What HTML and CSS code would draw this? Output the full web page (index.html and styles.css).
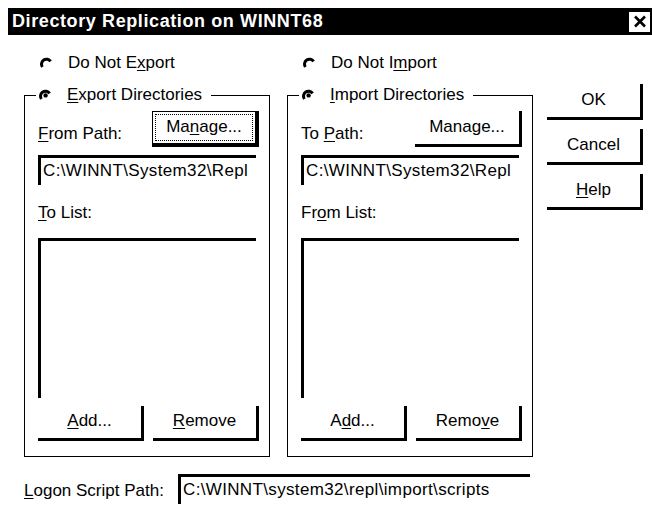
FILE: index.html
```html
<!DOCTYPE html>
<html lang="en">
<head>
    <meta charset="UTF-8">
    <title>Directory Replication on WINNT68</title>
    <link rel="stylesheet" href="styles.css">
</head>
<body>

<div class="dialog">
    <div class="titlebar">
        <span class="title">Directory Replication on WINNT68</span>
        <span class="close">
            <svg width="14" height="13" viewBox="0 0 14 13"><path d="M2 1.5 L12 11.5 M12 1.5 L2 11.5" stroke="#000" stroke-width="2.6" fill="none"/></svg>
        </span>
    </div>

    <div class="main">
        <!-- export side -->
        <div class="pane">
            <div class="radio-line">
                <svg class="radio" width="12" height="14" viewBox="0 0 12 14"><path d="M2.4 11 A4.6 4.6 0 1 1 10.6 5.4" fill="none" stroke="#000" stroke-width="3"/></svg>
                <span>Do Not E<u>x</u>port</span>
            </div>
            <fieldset class="group">
                <legend>
                    <svg class="radio" width="12" height="14" viewBox="0 0 12 14"><path d="M2.4 11 A4.6 4.6 0 1 1 10.6 5.4" fill="none" stroke="#000" stroke-width="3"/><circle cx="6.6" cy="7.4" r="2.2" fill="#000"/></svg>
                    <span><u>E</u>xport Directories</span>
                </legend>
                <div class="path-row">
                    <span class="label"><u>F</u>rom Path:</span>
                    <span class="btn default"><span class="focus">Ma<u>n</u>age...</span></span>
                </div>
                <div class="field">C:\WINNT\System32\Repl</div>
                <div class="label list-label"><u>T</u>o List:</div>
                <div class="listbox"></div>
                <div class="btn-row">
                    <span class="btn"><u>A</u>dd...</span>
                    <span class="btn"><u>R</u>emove</span>
                </div>
            </fieldset>
        </div>

        <!-- import side -->
        <div class="pane">
            <div class="radio-line">
                <svg class="radio" width="12" height="14" viewBox="0 0 12 14"><path d="M2.4 11 A4.6 4.6 0 1 1 10.6 5.4" fill="none" stroke="#000" stroke-width="3"/></svg>
                <span>Do Not I<u>m</u>port</span>
            </div>
            <fieldset class="group">
                <legend>
                    <svg class="radio" width="12" height="14" viewBox="0 0 12 14"><path d="M2.4 11 A4.6 4.6 0 1 1 10.6 5.4" fill="none" stroke="#000" stroke-width="3"/><circle cx="6.6" cy="7.4" r="2.2" fill="#000"/></svg>
                    <span><u>I</u>mport Directories</span>
                </legend>
                <div class="path-row">
                    <span class="label">To <u>P</u>ath:</span>
                    <span class="btn">Manage...</span>
                </div>
                <div class="field">C:\WINNT\System32\Repl</div>
                <div class="label list-label">Fr<u>o</u>m List:</div>
                <div class="listbox"></div>
                <div class="btn-row">
                    <span class="btn">A<u>d</u>d...</span>
                    <span class="btn">Remo<u>v</u>e</span>
                </div>
            </fieldset>
        </div>

        <div class="side-buttons">
            <span class="btn">OK</span>
            <span class="btn">Cancel</span>
            <span class="btn"><u>H</u>elp</span>
        </div>
    </div>

    <div class="logon-row">
        <span class="label"><u>L</u>ogon Script Path:</span>
        <div class="field logon-field">C:\WINNT\system32\repl\import\scripts</div>
    </div>
</div>

</body>
</html>
```

FILE: styles.css
```css
body {
    background-color: #fff;
    color: #000;
    font-family: "Liberation Sans", Arial, sans-serif;
    font-size: 17px;
    margin: 0;
    padding: 0;
}
.dialog {
    width: 652px;
    height: 523px;
    overflow: hidden;
}
.titlebar {
    margin: 8px 0 0 8px;
    height: 27px;
    background-color: #000;
    display: flex;
    align-items: center;
    justify-content: space-between;
    padding: 0 2px 0 4px;
}
.title {
    color: #fff;
    font-weight: bold;
    font-size: 18px;
    letter-spacing: 0.6px;
}
.close {
    width: 21px;
    height: 20px;
    background-color: #fff;
    display: flex;
    align-items: center;
    justify-content: center;
}
.main {
    display: flex;
    padding-left: 24px;
    margin-top: 18px;
}
.pane {
    width: 246px;
    margin-right: 17px;
}
.radio-line {
    height: 20px;
    display: flex;
    align-items: center;
    padding-left: 16px;
}
.radio {
    width: 12px;
    height: 14px;
    margin-right: 16px;
    flex-shrink: 0;
}
.group {
    box-sizing: border-box;
    width: 246px;
    min-width: 0;
    margin: 12px 0 0 0;
    padding: 6px 10px 15px 13px;
    border: 1px solid #000;
}
.group legend {
    display: flex;
    align-items: center;
    height: 20px;
    margin-left: -2px;
    padding: 0 9px 0 3px;
}
.label {
    line-height: 20px;
}
u {
    text-underline-offset: 2px;
}
.path-row {
    display: flex;
    justify-content: space-between;
    align-items: flex-end;
    height: 36px;
}
.path-row .label {
    padding-bottom: 3px;
}
.path-row .btn {
    width: 107px;
    height: 36px;
}
.btn {
    box-sizing: border-box;
    height: 35px;
    display: flex;
    align-items: center;
    justify-content: center;
    border-right: 3px solid #000;
    border-bottom: 3px solid #000;
    padding-bottom: 2px;
}
.btn.default {
    border: 1px solid #000;
    border-right-width: 4px;
    border-bottom-width: 4px;
    padding: 2px;
}
.focus {
    flex: 1;
    align-self: stretch;
    border: 1px dotted #000;
    display: flex;
    align-items: center;
    justify-content: center;
    padding-bottom: 2px;
}
.field {
    box-sizing: border-box;
    width: 218px;
    height: 30px;
    margin-top: 8px;
    border-top: 3px solid #000;
    border-left: 3px solid #000;
    padding-left: 2px;
    line-height: 26px;
    letter-spacing: 0.35px;
    white-space: nowrap;
    overflow: hidden;
}
.list-label {
    margin-top: 18px;
}
.listbox {
    box-sizing: border-box;
    width: 218px;
    height: 160px;
    margin-top: 15px;
    border-top: 3px solid #000;
    border-left: 3px solid #000;
}
.btn-row {
    display: flex;
    justify-content: space-between;
    margin-top: 8px;
}
.btn-row .btn {
    width: 106px;
}
.side-buttons {
    width: 96px;
    margin-left: -3px;
    margin-top: 31px;
    display: flex;
    flex-direction: column;
    gap: 9px;
}
.side-buttons .btn {
    height: 36px;
}
.logon-row {
    display: flex;
    align-items: center;
    padding-left: 24px;
    margin-top: 17px;
}
.logon-row .label {
    width: 154px;
    padding-top: 4px;
}
.logon-field {
    width: 352px;
    margin-top: 0;
}
```
